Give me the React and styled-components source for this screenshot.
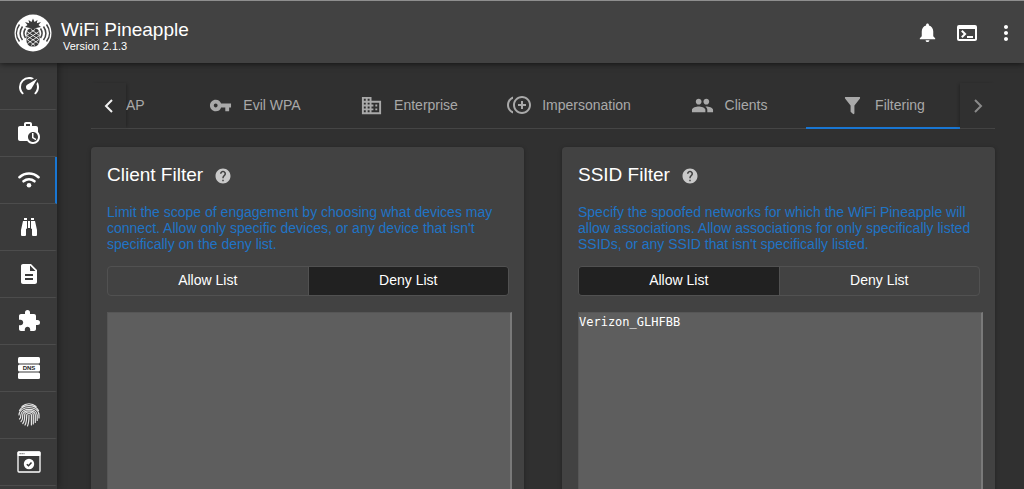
import React, { useState } from "react";
import styled, { createGlobalStyle, css } from "styled-components";
import {
  MdDescription,
  MdExtension,
  MdNotifications,
  MdTerminal,
  MdMoreVert,
  MdVpnKey,
  MdBusiness,
  MdControlPointDuplicate,
  MdPeople,
  MdHelp,
} from "react-icons/md";

const GlobalStyle = createGlobalStyle`
  *, *::before, *::after { box-sizing: border-box; }
  body {
    margin: 0;
    background: #303030;
    color: #fff;
    font-family: "Liberation Sans", Arial, sans-serif;
    font-size: 14px;
  }
  h1, h2, p { margin: 0; font-weight: 400; }
  button { font: inherit; color: inherit; background: none; border: 0; padding: 0; cursor: pointer; }
  a { color: inherit; text-decoration: none; }
  svg { display: block; flex: none; }
`;

const Shell = styled.div`
  display: flex;
  flex-direction: column;
  height: 100vh;
  overflow: hidden;
`;

const Header = styled.header`
  position: relative;
  z-index: 2;
  flex: none;
  display: flex;
  align-items: center;
  height: 63px;
  padding: 1px 8px 0 14px;
  background: #424242;
  border-top: 1px solid #8e8e8e;
  box-shadow: 0 1px 6px rgba(0, 0, 0, 0.6);
`;

const Brand = styled.div`
  margin-left: 9px;
  padding-top: 6px;
`;

const BrandName = styled.h1`
  font-size: 19px;
  line-height: 20px;
`;

const BrandVersion = styled.p`
  padding-left: 2px;
  font-size: 11px;
  line-height: 12px;
`;

const HeaderActions = styled.div`
  display: flex;
  align-items: center;
  gap: 17px;
  margin-left: auto;
`;

const HeaderButton = styled.button`
  display: grid;
  place-items: center;
  width: 22px;
  height: 32px;
`;

const Body = styled.div`
  flex: 1;
  min-height: 0;
  display: flex;
`;

const Sidebar = styled.nav`
  flex: none;
  width: 57px;
  overflow: hidden;
  background: #3a3a3a;
  box-shadow: 1px 0 8px rgba(0, 0, 0, 0.4);
`;

const SideLink = styled.a`
  display: grid;
  place-items: center;
  height: 47px;
  border-bottom: 1px solid #4c4c4c;
  border-right: 2px solid ${(p) => (p.$active ? "#1976d2" : "transparent")};
  padding-left: 2px;
`;

const Main = styled.main`
  flex: 1;
  min-width: 0;
  padding: 20px 29px 0 34px;
  overflow: hidden;
`;

const TabHeader = styled.div`
  display: flex;
  height: 46px;
  border-bottom: 1px solid #454545;
  color: #a9a9a9;
`;

const PageButton = styled.button`
  flex: none;
  display: grid;
  place-items: center;
  width: 35px;
  color: ${(p) => (p.$enabled ? "#f0f0f0" : "#8a8a8a")};
  box-shadow: ${(p) => (p.$side === "left" ? "2px" : "-2px")} 0 3px -1px rgba(0, 0, 0, 0.25);
`;

const TabTrack = styled.div`
  flex: 1;
  min-width: 0;
  display: flex;
  margin-bottom: -1px;
  overflow: hidden;
`;

const Tab = styled.button`
  display: flex;
  align-items: center;
  justify-content: center;
  gap: 11px;
  flex: 154 0 auto;
  width: 154px;
  border-bottom: 2px solid ${(p) => (p.$active ? "#1976d2" : "transparent")};
  ${(p) =>
    p.$partial &&
    css`
      flex: none;
      width: 52px;
      justify-content: flex-start;
    `}
  ${(p) =>
    p.$wide &&
    css`
      width: 166px;
    `}
`;

const Cards = styled.div`
  display: grid;
  grid-template-columns: 1fr 1fr;
  gap: 38px;
  margin-top: 18px;
`;

const Card = styled.section`
  padding: 16px 15px 16px 16px;
  background: #424242;
  border-radius: 4px;
  box-shadow: 0 1px 4px rgba(0, 0, 0, 0.3);
`;

const CardTitle = styled.div`
  display: flex;
  align-items: center;
  gap: 11px;
  height: 24px;

  h2 {
    font-size: 19px;
    line-height: 24px;
  }
`;

const HelpButton = styled.button`
  padding-top: 2px;
  color: #c9c9c9;
`;

const Description = styled.p`
  margin-top: 17px;
  color: #1f74c6;
  line-height: 16px;
`;

const Toggle = styled.div`
  display: flex;
  height: 30px;
  margin-top: 14px;
  border: 1px solid #515151;
  border-radius: 4px;
  overflow: hidden;
`;

const ToggleButton = styled.button`
  flex: 1;
  padding-bottom: 3px;
  background: ${(p) => (p.$selected ? "#212121" : "transparent")};

  & + & {
    border-left: 1px solid #515151;
  }
`;

const ListBox = styled.textarea`
  display: block;
  box-sizing: content-box;
  width: 100%;
  height: 280px;
  margin-top: 16px;
  padding: 2px 0;
  border: 1px solid #565656;
  border-right: 2px solid #7a7a7a;
  outline: 0;
  resize: none;
  background: #5e5e5e;
  color: #fff;
  font: 12px/14px "DejaVu Sans Mono", monospace;
`;

const Logo = () => (
  <svg width="38" height="38" viewBox="0 0 38 38" aria-hidden="true">
    <circle cx="19" cy="19" r="18.500" fill="#fff" />
    <g fill="none" stroke="#424242" strokeWidth="1.500">
      <path d="M11.500 14.500c-2 3-2 6.500 0 9.500M8.500 12.500c-3 4.500-3 9.500 0 13.500M5.500 10.500c-4 5.500-4 12 0 17" />
      <path d="M26.500 14.500c2 3 2 6.500 0 9.500M29.500 12.500c3 4.500 3 9.500 0 13.500M32.500 10.500c4 5.500 4 12 0 17" />
    </g>
    <path
      fill="#3b3b3b"
      d="M19 4.500l1.500 3.500 3-2-.7 3.200 4.200-1.200-2.500 3 2.500 2-5 1h-6l-5-1 2.500-2-2.500-3 4.200 1.200L14.500 6l3 2z"
    />
    <rect x="12.500" y="14" width="13" height="18.500" rx="5.500" fill="#3b3b3b" />
    <path
      d="M13 17.500l12 8M12.500 21.500l12 8M13 25.500l8 6M17 15.500l8.500 6M25 17.500l-12 8M25.500 21.500l-12 8M25 25.500l-8 6M21 15.500l-8.500 6"
      stroke="#fff"
      strokeWidth="0.800"
    />
  </svg>
);

const MdiIcon = ({ d, size = 22 }) => (
  <svg width={size} height={size} viewBox="0 0 24 24" fill="currentColor" aria-hidden="true">
    <path d={d} />
  </svg>
);

const SPEEDOMETER =
  "M12,16A3,3 0 0,1 9,13C9,11.88 9.61,10.9 10.5,10.39L20.21,4.77L14.68,14.35C14.18,15.33 13.17,16 12,16M12,3C13.81,3 15.5,3.5 16.97,4.32L14.87,5.53C14,5.19 13,5 12,5A8,8 0 0,0 4,13C4,15.21 4.89,17.21 6.34,18.65H6.35C6.74,19.04 6.74,19.67 6.35,20.06C5.96,20.45 5.32,20.45 4.93,20.07V20.07C3.12,18.26 2,15.76 2,13A10,10 0 0,1 12,3M22,13C22,15.76 20.88,18.26 19.07,20.07V20.07C18.68,20.45 18.05,20.45 17.66,20.06C17.27,19.67 17.27,19.04 17.66,18.65V18.65C19.11,17.2 20,15.21 20,13C20,12 19.81,11 19.46,10.1L20.67,8C21.5,9.5 22,11.18 22,13Z";
const BRIEFCASE =
  "M15 12H16.500V16.250L19.360 17.940L18.610 19.160L15 17V12M23 16C23 19.870 19.870 23 16 23C13.610 23 11.500 21.800 10.250 20H3C1.900 20 1 19.100 1 18V7C1 5.890 1.890 5 3 5H7V3C7 1.890 7.890 1 9 1H13C14.110 1 15 1.890 15 3V5H19C20.110 5 21 5.890 21 7V11.100C22.240 12.360 23 14.090 23 16M13 5V3H9V5H13M16 11C13.240 11 11 13.240 11 16C11 18.760 13.240 21 16 21C18.760 21 21 18.760 21 16C21 13.240 18.760 11 16 11Z";
const BINOCULARS =
  "M11,6H13V13H11V6M9,20A1,1 0 0,1 8,21H5A1,1 0 0,1 4,20V15L6,6H10V13A1,1 0 0,1 9,14V20M10,5H7V3H10V5M15,20V14A1,1 0 0,1 14,13V6H18L20,15V20A1,1 0 0,1 19,21H16A1,1 0 0,1 15,20M14,5V3H17V5H14Z";
const FUNNEL =
  "M14,12V19.88C14.04,20.18 13.94,20.5 13.71,20.71C13.32,21.1 12.69,21.1 12.3,20.71L10.29,18.7C10.06,18.47 9.96,18.16 10,17.87V12H9.97L4.21,4.62C3.87,4.19 3.95,3.56 4.38,3.22C4.57,3.08 4.78,3 5,3H19C19.22,3 19.43,3.08 19.62,3.22C20.05,3.56 20.13,4.19 19.79,4.62L14.03,12H14Z";

const WifiIcon = () => (
  <svg width="22" height="18" viewBox="0 0 22 18" fill="none" stroke="#fff" strokeWidth="2.600" strokeLinecap="round" aria-hidden="true">
    <path d="M1.500 6.200C7 1.300 15 1.300 20.500 6.200" />
    <path d="M5.500 10.300c3.300-2.700 7.700-2.700 11 0" />
    <circle cx="11" cy="14.300" r="2.300" fill="#fff" stroke="none" />
  </svg>
);

const DnsIcon = () => (
  <svg width="22" height="22" viewBox="0 0 22 22" aria-hidden="true">
    <g fill="#fff">
      <rect width="22" height="6.500" rx="1.500" />
      <rect y="7.500" width="22" height="7" rx="1.500" />
      <rect y="15.500" width="22" height="6.500" rx="1.500" />
    </g>
    <text x="11" y="13" textAnchor="middle" fontSize="6" fontWeight="700" fill="#222">
      DNS
    </text>
  </svg>
);

const FingerprintIcon = () => (
  <svg width="22" height="24" viewBox="0 0 22 24" fill="none" stroke="#e4e4e4" strokeWidth="1.200" strokeLinecap="round" aria-hidden="true">
    <path d="M4 3.500C8-.2 14-.2 18 3.500" />
    <path d="M1.500 7.500C5 1 17 1 20.500 7.500" />
    <path d="M1 12C1 2 21 2 21 12v3" />
    <path d="M1.500 16c1.500-1 1.300-2.500 1.300-4C3.500 4.500 18.500 4.500 19.200 12v5.500" />
    <path d="M3 18.500c1.800-1.500 1.700-4 1.700-6.500C5 6.500 17 6.500 17.300 12v7.500" />
    <path d="M4.800 20.500c1.800-2 1.900-5 1.900-8.500 0-4 8.600-4 8.600 0v9" />
    <path d="M7 22c1.500-2.500 1.700-6 1.700-10 0-2 4.700-2 4.700 0v10" />
    <path d="M9.500 23c1.300-3 1.500-7 1.500-11" />
  </svg>
);

const WindowCheckIcon = () => (
  <svg width="24" height="22" viewBox="0 0 24 22" aria-hidden="true">
    <rect x="1" y="1" width="22" height="20" rx="1" fill="none" stroke="#fff" strokeWidth="1.300" />
    <rect x="0.500" y="0.500" width="23" height="4.500" rx="1" fill="#fff" />
    <path d="M2.500 2.700h5" stroke="#555" strokeDasharray="1.300 0.700" />
    <circle cx="12" cy="13" r="5.200" fill="#fff" />
    <path d="M9.800 13.200l1.700 1.600 3-3.300" fill="none" stroke="#333" strokeWidth="1.500" />
  </svg>
);

const Chevron = ({ flip }) => (
  <svg width="10" height="14" viewBox="0 0 10 14" fill="none" stroke="currentColor" strokeWidth="2" aria-hidden="true">
    <path d={flip ? "M2 1l6 6-6 6" : "M8 1L2 7l6 6"} />
  </svg>
);

const sideItems = [
  ["Dashboard", <MdiIcon d={SPEEDOMETER} size={24} />],
  ["Campaigns", <MdiIcon d={BRIEFCASE} size={24} />],
  ["PineAP", <WifiIcon />],
  ["Recon", <MdiIcon d={BINOCULARS} size={24} />],
  ["Logging", <MdDescription size={24} />],
  ["Modules", <MdExtension size={24} />],
  ["DNS", <DnsIcon />],
  ["Fingerprint", <FingerprintIcon />],
  ["Settings", <WindowCheckIcon />],
];

const tabs = [
  { label: "AP", partial: true },
  { label: "Evil WPA", icon: <MdVpnKey size={23} /> },
  { label: "Enterprise", icon: <MdBusiness size={23} /> },
  { label: "Impersonation", icon: <MdControlPointDuplicate size={24} />, wide: true },
  { label: "Clients", icon: <MdPeople size={23} /> },
  { label: "Filtering", icon: <MdiIcon d={FUNNEL} size={23} /> },
];

function FilterCard({ title, description, initialMode, initialText }) {
  const [mode, setMode] = useState(initialMode);
  const [text, setText] = useState(initialText);
  return (
    <Card>
      <CardTitle>
        <h2>{title}</h2>
        <HelpButton type="button" aria-label={`Help: ${title}`}>
          <MdHelp size={18} />
        </HelpButton>
      </CardTitle>
      <Description>{description}</Description>
      <Toggle role="group" aria-label={`${title} mode`}>
        {["Allow List", "Deny List"].map((m) => (
          <ToggleButton
            key={m}
            type="button"
            $selected={mode === m}
            aria-pressed={mode === m}
            onClick={() => setMode(m)}
          >
            {m}
          </ToggleButton>
        ))}
      </Toggle>
      <ListBox
        aria-label={`${title} list`}
        spellCheck={false}
        value={text}
        onChange={(e) => setText(e.target.value)}
      />
    </Card>
  );
}

export default function App() {
  const [tab, setTab] = useState("Filtering");
  return (
    <Shell>
      <GlobalStyle />
      <Header>
        <Logo />
        <Brand>
          <BrandName>WiFi Pineapple</BrandName>
          <BrandVersion>Version 2.1.3</BrandVersion>
        </Brand>
        <HeaderActions>
          <HeaderButton type="button" aria-label="Notifications">
            <MdNotifications size={23} />
          </HeaderButton>
          <HeaderButton type="button" aria-label="Terminal">
            <MdTerminal size={24} />
          </HeaderButton>
          <HeaderButton type="button" aria-label="More options">
            <MdMoreVert size={24} />
          </HeaderButton>
        </HeaderActions>
      </Header>
      <Body>
        <Sidebar aria-label="Main">
          {sideItems.map(([label, icon]) => (
            <SideLink key={label} href="#" aria-label={label} $active={label === "PineAP"}>
              {icon}
            </SideLink>
          ))}
        </Sidebar>
        <Main>
          <TabHeader>
            <PageButton type="button" aria-label="Previous tabs" $side="left" $enabled>
              <Chevron />
            </PageButton>
            <TabTrack role="tablist">
              {tabs.map((t) => (
                <Tab
                  key={t.label}
                  type="button"
                  role="tab"
                  aria-selected={tab === t.label}
                  $active={tab === t.label}
                  $partial={t.partial}
                  $wide={t.wide}
                  onClick={() => setTab(t.label)}
                >
                  {t.icon}
                  {t.label}
                </Tab>
              ))}
            </TabTrack>
            <PageButton type="button" aria-label="Next tabs" $side="right">
              <Chevron flip />
            </PageButton>
          </TabHeader>
          <Cards>
            <FilterCard
              title="Client Filter"
              description="Limit the scope of engagement by choosing what devices may connect. Allow only specific devices, or any device that isn't specifically on the deny list."
              initialMode="Deny List"
              initialText=""
            />
            <FilterCard
              title="SSID Filter"
              description="Specify the spoofed networks for which the WiFi Pineapple will allow associations. Allow associations for only specifically listed SSIDs, or any SSID that isn't specifically listed."
              initialMode="Allow List"
              initialText="Verizon_GLHFBB"
            />
          </Cards>
        </Main>
      </Body>
    </Shell>
  );
}
